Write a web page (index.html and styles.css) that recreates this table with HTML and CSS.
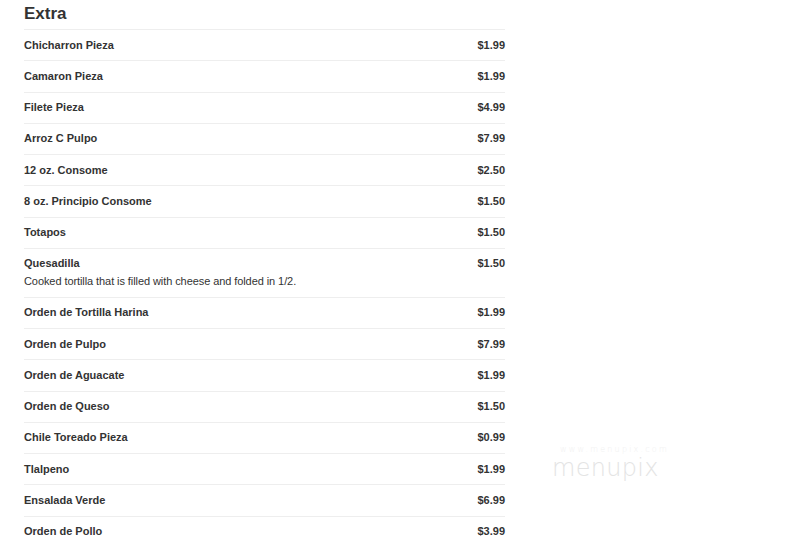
FILE: index.html
```html
<!DOCTYPE html>
<html lang="en">
<head>
    <meta charset="UTF-8">
    <title>Extra</title>
    <link rel="stylesheet" href="styles.css">
</head>
<body>

<div class="menu">
    <h2>Extra</h2>
    <ul class="items">
        <li><div class="row"><span>Chicharron Pieza</span><span>$1.99</span></div></li>
        <li><div class="row"><span>Camaron Pieza</span><span>$1.99</span></div></li>
        <li><div class="row"><span>Filete Pieza</span><span>$4.99</span></div></li>
        <li><div class="row"><span>Arroz C Pulpo</span><span>$7.99</span></div></li>
        <li><div class="row"><span>12 oz. Consome</span><span>$2.50</span></div></li>
        <li><div class="row"><span>8 oz. Principio Consome</span><span>$1.50</span></div></li>
        <li><div class="row"><span>Totapos</span><span>$1.50</span></div></li>
        <li>
            <div class="row"><span>Quesadilla</span><span>$1.50</span></div>
            <p class="desc">Cooked tortilla that is filled with cheese and folded in 1/2.</p>
        </li>
        <li><div class="row"><span>Orden de Tortilla Harina</span><span>$1.99</span></div></li>
        <li><div class="row"><span>Orden de Pulpo</span><span>$7.99</span></div></li>
        <li><div class="row"><span>Orden de Aguacate</span><span>$1.99</span></div></li>
        <li><div class="row"><span>Orden de Queso</span><span>$1.50</span></div></li>
        <li><div class="row"><span>Chile Toreado Pieza</span><span>$0.99</span></div></li>
        <li><div class="row"><span>Tlalpeno</span><span>$1.99</span></div></li>
        <li><div class="row"><span>Ensalada Verde</span><span>$6.99</span></div></li>
        <li><div class="row"><span>Orden de Pollo</span><span>$3.99</span></div></li>
    </ul>
</div>

<div class="watermark">
    <small>www.menupix.com</small>
    <span>menupix</span>
</div>

</body>
</html>
```

FILE: styles.css
```css
body {
    font-family: "Liberation Sans", Arial, sans-serif;
    margin: 0;
    padding: 0;
    background: white;
    color: #333;
}

.menu {
    width: 481px;
    margin-left: 24px;
}

h2 {
    margin: 0;
    padding-top: 4px;
    font-size: 17px;
    line-height: 20px;
    height: 25px;
    border-bottom: 1px solid #eee;
}

.items {
    list-style: none;
    margin: 0;
    padding: 0;
}

.items li {
    padding: 7.5px 0 8.5px;
    border-bottom: 1px solid #eee;
}

.items li:last-child {
    border-bottom: none;
}

.row {
    display: flex;
    justify-content: space-between;
    font-size: 11px;
    font-weight: bold;
    line-height: 14.25px;
}

.desc {
    margin: 3.5px 0 0;
    font-size: 11px;
    line-height: 14.25px;
    letter-spacing: -0.08px;
}

.watermark {
    position: absolute;
    left: 552px;
    top: 445px;
    color: #e4e4e4;
    display: flex;
    flex-direction: column;
    font-family: "DejaVu Sans", sans-serif;
    font-weight: 200;
}

.watermark small {
    font-size: 8px;
    letter-spacing: 2.2px;
    color: #f0f0f0;
    margin-left: 8px;
}

.watermark span {
    font-size: 24px;
    line-height: 28px;
    letter-spacing: 0.3px;
}
```
